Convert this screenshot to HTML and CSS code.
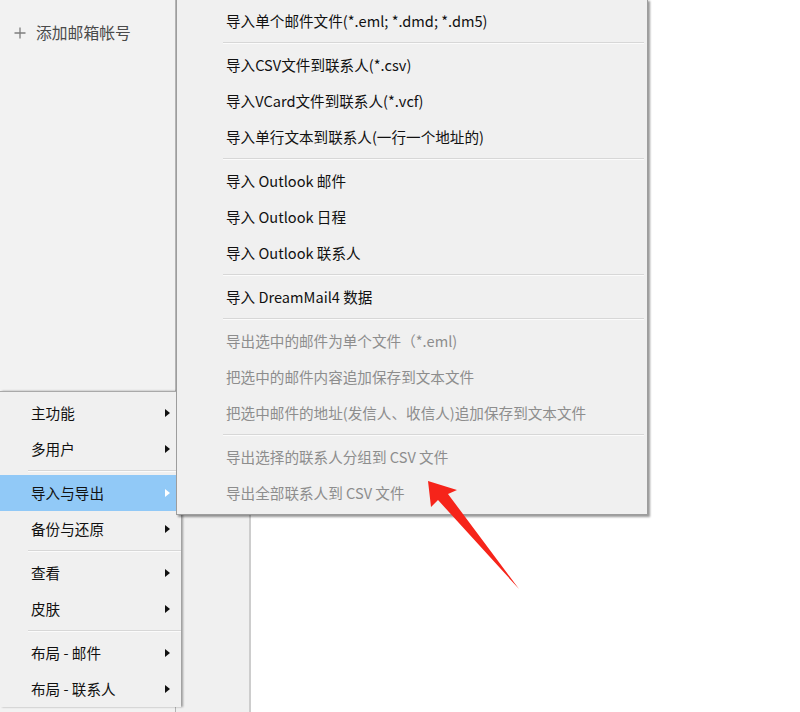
FILE: index.html
```html
<!DOCTYPE html>
<html lang="zh-CN">
<head>
    <meta charset="UTF-8">
    <meta name="viewport" content="width=device-width, initial-scale=1.0">
    <title>导入与导出</title>
    <link rel="stylesheet" href="styles.css">
</head>
<body>
    <div class="window">
        <div class="sidebar">
            <div class="add-account">
                <svg class="plus" width="12" height="12" viewBox="0 0 12 12">
                    <path d="M6 0.5V11.5M0.5 6H11.5" stroke="#7d7d7d" stroke-width="1.3" fill="none"/>
                </svg>
                添加邮箱帐号
            </div>
        </div>
        <div class="folder-col"></div>
        <div class="main"></div>
    </div>

    <div class="menu main-menu">
        <div class="menu-item">主功能<span class="arrow"></span></div>
        <div class="menu-item">多用户<span class="arrow"></span></div>
        <div class="menu-sep"></div>
        <div class="menu-item active">导入与导出<span class="arrow"></span></div>
        <div class="menu-item">备份与还原<span class="arrow"></span></div>
        <div class="menu-sep"></div>
        <div class="menu-item">查看<span class="arrow"></span></div>
        <div class="menu-item">皮肤<span class="arrow"></span></div>
        <div class="menu-sep"></div>
        <div class="menu-item">布局 - 邮件<span class="arrow"></span></div>
        <div class="menu-item">布局 - 联系人<span class="arrow"></span></div>
    </div>

    <div class="menu sub-menu">
        <div class="menu-item">导入单个邮件文件(*.eml; *.dmd; *.dm5)</div>
        <div class="menu-sep"></div>
        <div class="menu-item">导入CSV文件到联系人(*.csv)</div>
        <div class="menu-item">导入VCard文件到联系人(*.vcf)</div>
        <div class="menu-item">导入单行文本到联系人(一行一个地址的)</div>
        <div class="menu-sep"></div>
        <div class="menu-item">导入 Outlook 邮件</div>
        <div class="menu-item">导入 Outlook 日程</div>
        <div class="menu-item">导入 Outlook 联系人</div>
        <div class="menu-sep"></div>
        <div class="menu-item">导入 DreamMail4 数据</div>
        <div class="menu-sep"></div>
        <div class="menu-item disabled">导出选中的邮件为单个文件（*.eml)</div>
        <div class="menu-item disabled">把选中的邮件内容追加保存到文本文件</div>
        <div class="menu-item disabled">把选中邮件的地址(发信人、收信人)追加保存到文本文件</div>
        <div class="menu-sep"></div>
        <div class="menu-item disabled">导出选择的联系人分组到 CSV 文件</div>
        <div class="menu-item disabled">导出全部联系人到 CSV 文件</div>
    </div>

    <svg class="annotation" width="800" height="712" viewBox="0 0 800 712">
        <polygon points="428,481 431,507 438,500 519,589 448,494 457,490" fill="#f6241a"/>
    </svg>
</body>
</html>
```

FILE: styles.css
```css
body {
    margin: 0;
    width: 800px;
    height: 712px;
    overflow: hidden;
    position: relative;
    font-family: "Noto Sans CJK SC", "Noto Sans", sans-serif;
    background-color: #ffffff;
}
.window {
    display: flex;
    height: 712px;
}
.sidebar {
    width: 175px;
    background: #f2f2f2;
    border-right: 1px solid #b4b4b4;
}
.add-account {
    display: flex;
    align-items: center;
    padding: 21px 0 0 14px;
    font-size: 15.8px;
    color: #4a4a4a;
    line-height: 24px;
}
.plus {
    margin-right: 10px;
}
.folder-col {
    width: 73px;
    background: #f0f0f0;
    border-right: 2px solid #cdcdcd;
}
.main {
    flex-grow: 1;
    background: #ffffff;
}
.menu {
    position: absolute;
    background: #f0f0f0;
    font-size: 14.6px;
    color: #111111;
}
.menu-item {
    height: 36px;
    line-height: 36px;
    display: flex;
    align-items: center;
    justify-content: space-between;
    white-space: nowrap;
}
.menu-sep {
    height: 8px;
    display: flex;
    align-items: center;
}
.menu-sep::after {
    content: "";
    flex-grow: 1;
    border-top: 1px solid #d7d7d7;
    border-bottom: 1px solid #fbfbfb;
}
.main-menu {
    left: 0;
    top: 391px;
    width: 181px;
    padding-top: 3px;
    border-top: 1px solid #a9a9a9;
    box-shadow: 2px 0 2px rgba(0, 0, 0, 0.35);
}
.main-menu .menu-item {
    padding: 0 11px 0 31px;
}
.main-menu .menu-sep {
    padding-left: 28px;
}
.main-menu .active {
    background: #91c9f7;
    margin-right: 5px;
    padding-right: 6px;
}
.arrow {
    width: 0;
    height: 0;
    border-top: 4px solid transparent;
    border-bottom: 4px solid transparent;
    border-left: 5px solid #111111;
}
.active .arrow {
    border-left-color: #ffffff;
}
.sub-menu {
    left: 176px;
    top: -1px;
    width: 470px;
    padding: 3px 0 3px 0;
    border: 1px solid #9d9d9d;
    box-shadow: 2px 2px 2px rgba(0, 0, 0, 0.4);
}
.sub-menu .menu-item {
    padding-left: 49px;
}
.sub-menu .menu-sep {
    padding: 0 3px 0 46px;
}
.sub-menu .disabled {
    color: #8d8d8d;
}
.annotation {
    position: absolute;
    left: 0;
    top: 0;
    pointer-events: none;
}
```
